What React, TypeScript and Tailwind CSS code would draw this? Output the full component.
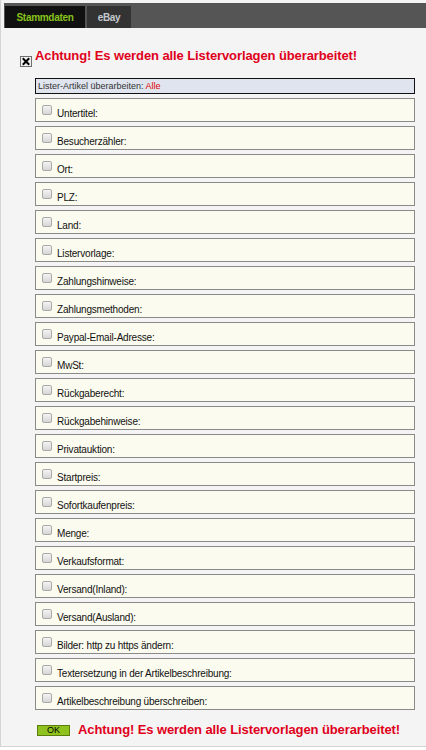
import React from "react";

const labels = [
  "Untertitel:",
  "Besucherzähler:",
  "Ort:",
  "PLZ:",
  "Land:",
  "Listervorlage:",
  "Zahlungshinweise:",
  "Zahlungsmethoden:",
  "Paypal-Email-Adresse:",
  "MwSt:",
  "Rückgaberecht:",
  "Rückgabehinweise:",
  "Privatauktion:",
  "Startpreis:",
  "Sofortkaufenpreis:",
  "Menge:",
  "Verkaufsformat:",
  "Versand(Inland):",
  "Versand(Ausland):",
  "Bilder: http zu https ändern:",
  "Textersetzung in der Artikelbeschreibung:",
  "Artikelbeschreibung überschreiben:",
];

function XIcon() {
  return (
    <svg width="12" height="11" viewBox="0 0 12 11" className="block">
      <rect x="0.5" y="0.5" width="11" height="10" fill="#f2f2f2" stroke="#6f6f6f" />
      <path d="M3.5 3 L8.5 8 M8.5 3 L3.5 8" stroke="#000" strokeWidth="2" strokeLinecap="square" />
    </svg>
  );
}

function Check() {
  return (
    <span className="block w-[10px] h-[10px] rounded-[2px] border border-[#a9a9a9] bg-gradient-to-b from-[#f4f4f4] to-[#d6d6d6] shrink-0" />
  );
}

export default function App() {
  return (
    <div className="w-[426px] h-[750px] bg-white font-['Liberation_Sans',Arial,sans-serif] overflow-hidden">
      <div className="h-[747px] bg-[#f4f4f4] border-l border-b border-[#d4d4d4] pt-[3px] pl-[3px]">
        {/* tab bar */}
        <div className="h-[25px] bg-[#555555] flex items-end gap-[2px] pl-[1px]">
          <div className="w-[80px] h-[22px] bg-[#111111] flex items-center justify-center text-[10px] font-bold tracking-[-0.3px] text-[#86c21c]">
            Stammdaten
          </div>
          <div className="w-[44px] h-[22px] bg-[#333333] flex items-center justify-center text-[10px] font-bold tracking-[-0.3px] text-[#c3c8cf]">
            eBay
          </div>
        </div>

        {/* title */}
        <div className="mt-[20px] h-[16px] flex items-end pl-[16px] gap-[3px]">
          <div className="mb-[-3px]">
            <XIcon />
          </div>
          <span className="text-[13px] leading-[16px] font-bold text-[#e0001b] tracking-[-0.1px]">
            Achtung! Es werden alle Listervorlagen überarbeitet!
          </span>
        </div>

        {/* list */}
        <div className="mt-[14px] ml-[31px] w-[380px] flex flex-col gap-[4px]">
          <div className="h-[16px] border border-[#111111] bg-[#dfe4ee] pl-[2px] text-[9px] leading-[14px] text-[#333333]">
            Lister-Artikel überarbeiten: <span className="text-[#e00000]">Alle</span>
          </div>
          {labels.map((l) => (
            <div
              key={l}
              className="h-[24px] border border-[#8a8a8a] bg-[#fbfbef] flex items-start pl-[6px]"
            >
              <div className="mt-[6px]">
                <Check />
              </div>
              <span className="ml-[5px] mt-[9px] text-[10px] leading-[12px] tracking-[-0.2px] text-[#111111]">{l}</span>
            </div>
          ))}
        </div>

        {/* bottom */}
        <div className="mt-[12px] ml-[33px] h-[16px] flex items-center gap-[8px]">
          <div className="w-[33px] h-[11px] bg-[#8fc21e] border border-[#5b7d0c] flex items-center justify-center text-[9px] leading-[9px] text-black">
            OK
          </div>
          <span className="text-[13px] leading-[16px] font-bold text-[#e0001b] tracking-[-0.1px]">
            Achtung! Es werden alle Listervorlagen überarbeitet!
          </span>
        </div>
      </div>
    </div>
  );
}
